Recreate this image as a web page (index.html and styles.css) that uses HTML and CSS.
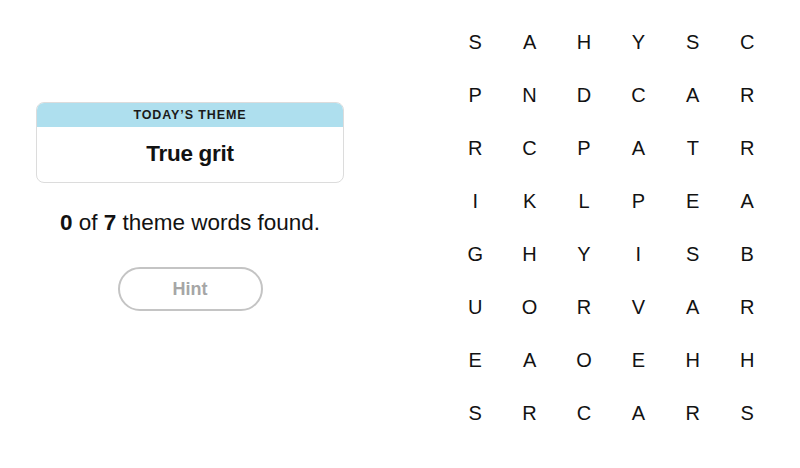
FILE: index.html
```html
<!DOCTYPE html>
<html>
<head>
<meta charset="utf-8">
<link rel="stylesheet" href="styles.css">
</head>
<body>
<div class="page">
  <section class="info">
    <div class="theme-card">
      <div class="theme-head">TODAY’S THEME</div>
      <div class="theme-body">True grit</div>
    </div>
    <p class="progress"><b>0</b> of <b>7</b> theme words found.</p>
    <button class="hint">Hint</button>
  </section>
  <section class="board">
    <span>S</span><span>A</span><span>H</span><span>Y</span><span>S</span><span>C</span>
    <span>P</span><span>N</span><span>D</span><span>C</span><span>A</span><span>R</span>
    <span>R</span><span>C</span><span>P</span><span>A</span><span>T</span><span>R</span>
    <span>I</span><span>K</span><span>L</span><span>P</span><span>E</span><span>A</span>
    <span>G</span><span>H</span><span>Y</span><span>I</span><span>S</span><span>B</span>
    <span>U</span><span>O</span><span>R</span><span>V</span><span>A</span><span>R</span>
    <span>E</span><span>A</span><span>O</span><span>E</span><span>H</span><span>H</span>
    <span>S</span><span>R</span><span>C</span><span>A</span><span>R</span><span>S</span>
  </section>
</div>
</body>
</html>
```
FILE: styles.css
```css
html, body {
  margin: 0;
  padding: 0;
  background: #fff;
}
body {
  font-family: "Liberation Sans", Arial, sans-serif;
  color: #121212;
  width: 800px;
  height: 468px;
  overflow: hidden;
}
.page {
  display: flex;
  align-items: flex-start;
}
.info {
  width: 308px;
  margin-left: 36px;
  padding-top: 102px;
  display: flex;
  flex-direction: column;
  align-items: center;
}
.theme-card {
  width: 100%;
  box-sizing: border-box;
  border: 1px solid #dcdcdc;
  border-radius: 8px;
  overflow: hidden;
}
.theme-head {
  background: #aedfee;
  height: 24px;
  line-height: 25px;
  text-align: center;
  font-family: "Liberation Sans", Arial, sans-serif;
  font-weight: 700;
  font-size: 12.5px;
  letter-spacing: 0.9px;
  color: #1a1a1a;
}
.theme-body {
  height: 55px;
  line-height: 54px;
  text-align: center;
  font-weight: 700;
  font-size: 22.5px;
  letter-spacing: -0.3px;
}
.progress {
  margin: 28px 0 0;
  font-size: 22.5px;
  line-height: 24px;
  color: #121212;
  white-space: nowrap;
}
.progress b {
  font-weight: 700;
}
.hint {
  margin-top: 32px;
  width: 145px;
  height: 44px;
  border: 2px solid #c4c4c4;
  border-radius: 22px;
  background: #fff;
  color: #a6a6a6;
  font-family: "Liberation Sans", Arial, sans-serif;
  font-weight: 700;
  font-size: 18px;
  padding: 0;
}
.board {
  margin-left: 104px;
  margin-top: 16px;
  display: grid;
  grid-template-columns: repeat(6, 54.4px);
  grid-auto-rows: 53px;
}
.board span {
  display: flex;
  align-items: center;
  justify-content: center;
  font-size: 20px;
  color: #121212;
}
```
